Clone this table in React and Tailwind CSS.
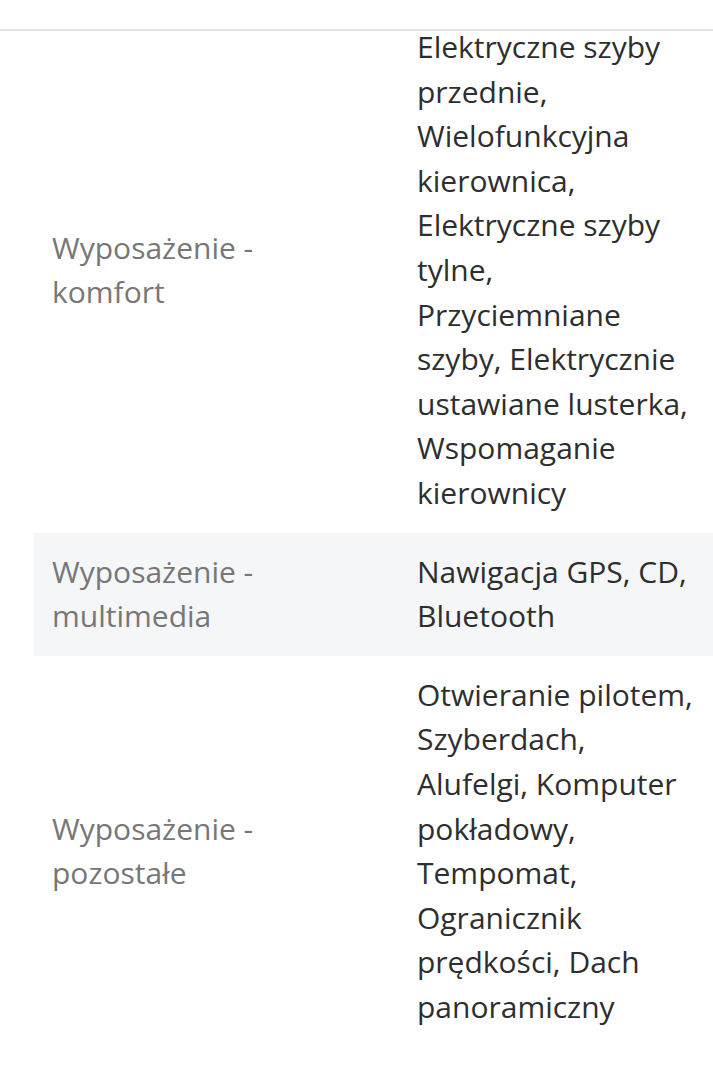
const rows = [
  {
    label: 'Wyposażenie - komfort',
    value:
      'Elektryczne szyby przednie, Wielofunkcyjna kierownica, Elektryczne szyby tylne, Przyciemniane szyby, Elektrycznie ustawiane lusterka, Wspomaganie kierownicy',
  },
  {
    label: 'Wyposażenie - multimedia',
    value: 'Nawigacja GPS, CD, Bluetooth',
  },
  {
    label: 'Wyposażenie - pozostałe',
    value:
      'Otwieranie pilotem, Szyberdach, Alufelgi, Komputer pokładowy, Tempomat, Ogranicznik prędkości, Dach panoramiczny',
  },
];

export default function App() {
  return (
    <div className="min-h-screen bg-white font-['Open_Sans',sans-serif] text-[30px] leading-[44.6px] overflow-hidden">
      {/* Header strip */}
      <div className="relative z-10 h-[31px] border-b-2 border-[#e4e4e4]" />

      <table className="ml-[34px] -mt-[23px] w-[679px] table-fixed border-collapse">
        <colgroup>
          <col className="w-[365px]" />
          <col className="w-[314px]" />
        </colgroup>
        <tbody>
          {rows.map((row, idx) => (
            <tr key={idx} className={idx % 2 === 1 ? 'bg-[#f5f6f7]' : 'bg-white'}>
              <td className="pl-[18px] pr-[90px] py-[17px] align-middle text-[#777777]">{row.label}</td>
              <td className="px-[18px] py-[17px] align-middle text-[#2e2e2e]">{row.value}</td>
            </tr>
          ))}
        </tbody>
      </table>
    </div>
  );
}
